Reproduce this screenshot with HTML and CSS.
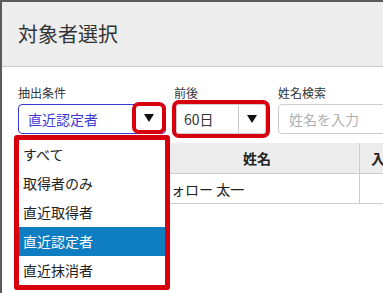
FILE: index.html
```html
<!DOCTYPE html>
<html lang="ja">
<head>
    <meta charset="UTF-8">
    <meta name="viewport" content="width=device-width, initial-scale=1.0">
    <title>対象者選択</title>
    <link rel="stylesheet" href="styles.css">
</head>
<body>

    <div class="modal">
        <header class="modal-header">対象者選択</header>

        <div class="modal-body">
            <div class="filters">
                <div class="field field-cond">
                    <label>抽出条件</label>
                    <div class="select select-open">
                        <span class="select-text">直近認定者</span>
                        <span class="select-arrow mark">
                            <svg width="10" height="8" viewBox="0 0 10 8"><path d="M0 0H10L5 8Z" fill="#111"/></svg>
                        </span>
                    </div>
                    <ul class="options">
                        <li>すべて</li>
                        <li>取得者のみ</li>
                        <li>直近取得者</li>
                        <li class="active">直近認定者</li>
                        <li>直近抹消者</li>
                    </ul>
                </div>

                <div class="field field-range">
                    <label>前後</label>
                    <div class="select select-range mark">
                        <span class="select-text">60日</span>
                        <span class="select-arrow">
                            <svg width="10" height="8" viewBox="0 0 10 8"><path d="M0 0H10L5 8Z" fill="#111"/></svg>
                        </span>
                    </div>
                </div>

                <div class="field field-search">
                    <label>姓名検索</label>
                    <input type="text" placeholder="姓名を入力">
                </div>
            </div>

            <table class="list">
                <thead>
                    <tr>
                        <th class="col-no"></th>
                        <th class="col-name">姓名</th>
                        <th class="col-date">入会日</th>
                    </tr>
                </thead>
                <tbody>
                    <tr>
                        <td class="col-no"></td>
                        <td class="col-name">フォロー 太一</td>
                        <td class="col-date"></td>
                    </tr>
                </tbody>
            </table>
        </div>
    </div>

</body>
</html>
```

FILE: styles.css
```css
html, body {
    margin: 0;
    height: 100%;
    overflow: hidden;
}
body {
    background-color: #5b5b5b;
    font-family: "Noto Sans CJK JP", "Noto Sans", sans-serif;
    color: #333;
}
.modal {
    margin: 2px 0 0 2px;
    height: 100%;
    background-color: #fff;
    overflow: hidden;
}
.modal-header {
    height: 64px;
    line-height: 64px;
    padding-left: 16px;
    font-size: 20px;
    color: #333;
    background-color: #ededed;
    border-bottom: 1px solid #ccc;
}
.modal-body {
    padding: 18px 0 0 16px;
}
.filters {
    display: flex;
    gap: 8px;
    width: 600px;
}
.field {
    position: relative;
}
.field label {
    display: block;
    font-size: 12px;
    line-height: 16px;
    margin-bottom: 3px;
}
.field-cond {
    width: 148px;
}
.field-range {
    width: 95px;
}
.field-search {
    width: 150px;
    margin-left: 1px;
}
.select {
    display: flex;
    align-items: center;
    height: 30px;
    box-sizing: border-box;
    border: 1px solid #ccc;
    border-radius: 4px;
    font-size: 14px;
    background-color: #fff;
}
.select-open {
    border-color: #3a3ad2;
}
.select-open .select-text {
    color: #3a3ad2;
}
.select-text {
    flex: 1;
    padding-left: 9px;
}
.select-open .select-arrow {
    width: 26px;
    height: 24px;
    margin-right: 3px;
    margin-top: -2px;
    border-radius: 3px;
    display: flex;
    align-items: center;
    justify-content: center;
}
.mark {
    outline: 4px solid #d9000d;
}
.select-range {
    margin-left: 2px;
    width: 90px;
    border-radius: 3px;
}
.select-range .select-text {
    padding-left: 7px;
    color: #333;
}
.select-range .select-arrow {
    width: 26px;
    height: 100%;
    border-left: 1px solid #ccc;
    display: flex;
    align-items: center;
    justify-content: center;
}
.field-search input {
    display: block;
    width: 100%;
    height: 30px;
    box-sizing: border-box;
    border: 1px solid #ccc;
    border-radius: 4px;
    padding: 0 10px;
    font-family: inherit;
    font-size: 14px;
}
.field-search input::placeholder {
    color: #b0b0b0;
}
.options {
    position: absolute;
    left: -4px;
    top: 50px;
    z-index: 2;
    width: 146px;
    margin: 0;
    padding: 0;
    list-style: none;
    background-color: #fff;
    border: 5px solid #d9000d;
    border-radius: 3px;
}
.options li {
    height: 29px;
    line-height: 29px;
    padding-left: 4px;
    font-size: 14px;
    color: #222;
}
.options li.active {
    background-color: #0e7dc2;
    color: #fff;
}
.list {
    margin-top: 9px;
    border-collapse: collapse;
    table-layout: fixed;
    width: 480px;
    font-size: 14px;
}
.list th, .list td {
    padding: 0;
    border-bottom: 1px solid #ccc;
    color: #222;
}
.list th {
    height: 30px;
    background-color: #ececec;
    font-weight: bold;
}
.list td {
    height: 29px;
}
.col-no {
    width: 137px;
}
.col-name {
    width: 204px;
    border-right: 1px solid #ccc;
}
.list td.col-name {
    padding-left: 2px;
}
.list .col-date {
    text-align: left;
    padding-left: 11px;
}
```
